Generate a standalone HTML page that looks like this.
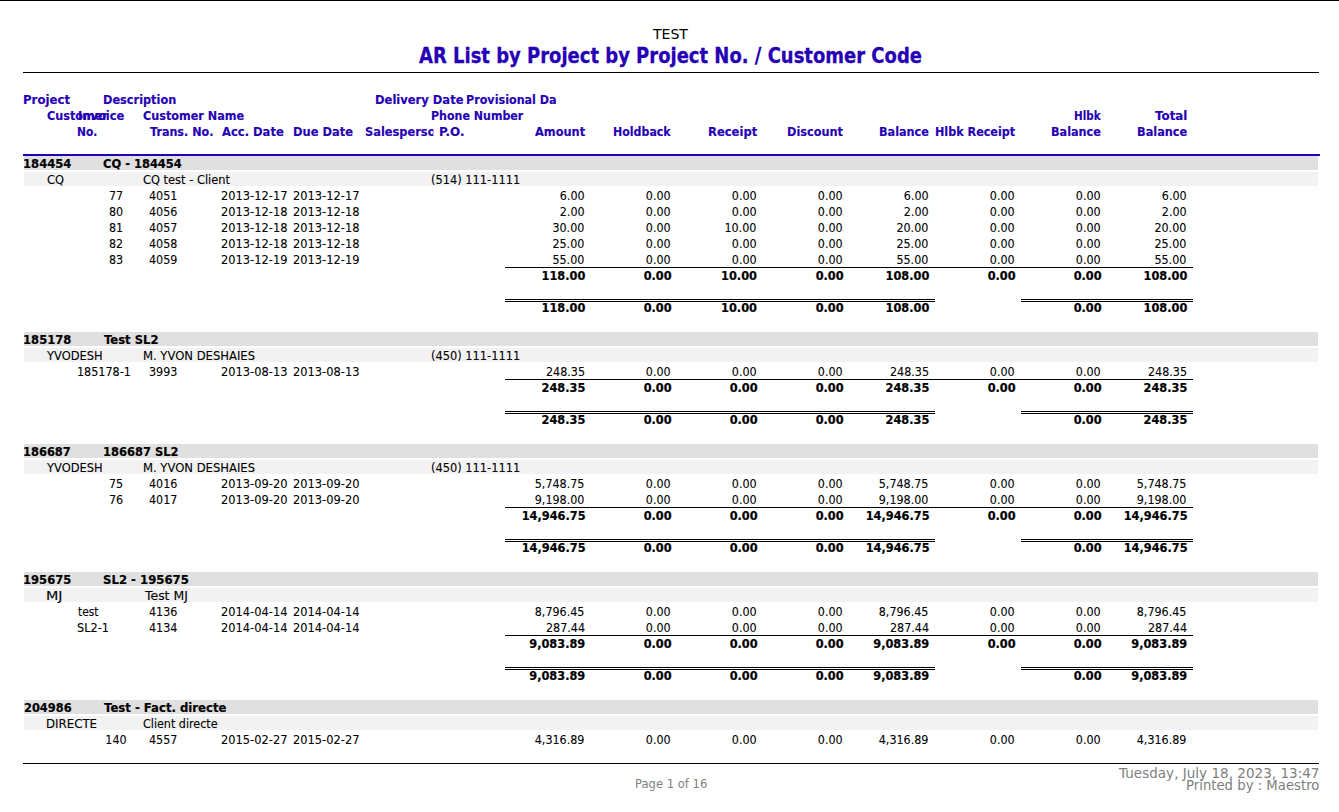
<!DOCTYPE html>
<html lang="en"><head><meta charset="utf-8"><title>AR List by Project by Project No. / Customer Code</title>
<style>

html,body{margin:0;padding:0;background:#fff;}
body{width:1339px;height:812px;position:relative;overflow:hidden;font-family:"DejaVu Sans","Liberation Sans",sans-serif;color:#000;}
.r{position:absolute;}
.t{position:absolute;white-space:nowrap;display:block;}
.n{font-family:"DejaVu Sans","Liberation Sans",sans-serif;font-size:12px;line-height:16px;height:16px;font-weight:400;color:#000;-webkit-text-stroke:0.1px #000;}
.b{font-family:"DejaVu Sans","Liberation Sans",sans-serif;font-size:12px;line-height:16px;height:16px;font-weight:700;color:#000;-webkit-text-stroke:0.2px #000;}
.h{font-family:"DejaVu Sans","Liberation Sans",sans-serif;font-size:12px;line-height:16px;height:16px;font-weight:700;color:#2600b4;-webkit-text-stroke:0.15px #2600b4;}
.co{font-family:"DejaVu Sans","Liberation Sans",sans-serif;font-size:14px;line-height:20px;height:20px;font-weight:400;color:#000;}
.ti{font-family:"DejaVu Sans","Liberation Sans",sans-serif;font-size:20.5px;line-height:28px;height:28px;font-weight:700;color:#2600b4;-webkit-text-stroke:0.3px #2600b4;}
.pg{font-family:"DejaVu Sans","Liberation Sans",sans-serif;font-size:12px;line-height:16px;height:16px;font-weight:400;color:#808080;}
.ft{font-family:"DejaVu Sans","Liberation Sans",sans-serif;font-size:14px;line-height:18px;height:18px;font-weight:400;color:#808080;}

</style></head><body>
<header class="report-header">
<div class="r" style="left:0px;top:0px;width:1339px;height:1px;background:#000"></div>
<div class="r" style="left:23px;top:72px;width:1296px;height:1px;background:#000"></div>
<span class="t co" style="top:24px;left:653.25px;transform:scaleX(1.0029);transform-origin:left center;">TEST</span>
<span class="t ti" style="top:42px;left:419.3px;transform:scaleX(0.8769);transform-origin:left center;">AR List by Project by Project No. / Customer Code</span>
</header>
<div class="column-header">
<span class="t h" style="top:92px;left:22.97px;transform:scaleX(0.9797);transform-origin:left center;">Project</span>
<span class="t h" style="top:92px;left:102.91px;transform:scaleX(0.9439);transform-origin:left center;">Description</span>
<span class="t h" style="top:92px;left:374.99px;transform:scaleX(0.9602);transform-origin:left center;">Delivery Date</span>
<span class="t h" style="top:92px;left:465.62px;transform:scaleX(0.9309);transform-origin:left center;">Provisional Da</span>
<span class="t h" style="top:108px;left:47.38px;transform:scaleX(0.936);transform-origin:left center;">Customer</span>
<span class="t h" style="top:108px;left:77.59px;transform:scaleX(0.9574);transform-origin:left center;">Invoice</span>
<span class="t h" style="top:108px;left:143.18px;transform:scaleX(0.936);transform-origin:left center;">Customer Name</span>
<span class="t h" style="top:108px;left:431.03px;transform:scaleX(0.9209);transform-origin:left center;">Phone Number</span>
<span class="t h" style="top:124px;left:76.86px;transform:scaleX(0.8916);transform-origin:left center;">No.</span>
<span class="t h" style="top:124px;left:149.85px;transform:scaleX(0.9299);transform-origin:left center;">Trans. No.</span>
<span class="t h" style="top:124px;left:221.9px;transform:scaleX(0.9624);transform-origin:left center;">Acc. Date</span>
<span class="t h" style="top:124px;left:292.89px;transform:scaleX(0.9551);transform-origin:left center;">Due Date</span>
<span class="t h" style="top:124px;left:365px;transform:scaleX(0.95);transform-origin:left center;width:72px;clip-path:inset(0 0 0 0)">Salesperso</span>
<span class="t h" style="top:124px;left:438.75px;transform:scaleX(0.9957);transform-origin:left center;">P.O.</span>
<span class="t h" style="top:124px;left:534.75px;transform:scaleX(0.9479);transform-origin:left center;">Amount</span>
<span class="t h" style="top:124px;left:612.98px;transform:scaleX(0.9194);transform-origin:left center;">Holdback</span>
<span class="t h" style="top:124px;left:707.99px;transform:scaleX(0.9628);transform-origin:left center;">Receipt</span>
<span class="t h" style="top:124px;left:787.01px;transform:scaleX(0.9425);transform-origin:left center;">Discount</span>
<span class="t h" style="top:124px;left:879.01px;transform:scaleX(0.9372);transform-origin:left center;">Balance</span>
<span class="t h" style="top:124px;left:934.72px;transform:scaleX(0.9322);transform-origin:left center;">Hlbk Receipt</span>
<span class="t h" style="top:124px;left:1051.27px;transform:scaleX(0.937);transform-origin:left center;">Balance</span>
<span class="t h" style="top:124px;left:1137.11px;transform:scaleX(0.943);transform-origin:left center;">Balance</span>
<span class="t h" style="top:108px;left:1073.88px;transform:scaleX(0.865);transform-origin:left center;">Hlbk</span>
<span class="t h" style="top:108px;left:1155.45px;transform:scaleX(0.989);transform-origin:left center;">Total</span>
<div class="r" style="left:23px;top:154px;width:1297px;height:2px;background:#2600b4"></div>
</div>
<main class="report-body">
<section class="project">
<div class="r" style="left:24px;top:156px;width:1294px;height:14px;background:#e0e0e0"></div>
<span class="t b" style="top:156px;left:22.74px;transform:scaleX(0.9658);transform-origin:left center;">184454</span>
<span class="t b" style="top:156px;left:102.97px;transform:scaleX(0.9558);transform-origin:left center;">CQ - 184454</span>
<div class="r" style="left:24px;top:172px;width:1294px;height:14px;background:#f2f2f2"></div>
<span class="t n" style="top:172px;left:46.83px;transform:scaleX(0.9576);transform-origin:left center;">CQ</span>
<span class="t n" style="top:172px;left:142.94px;transform:scaleX(0.9525);transform-origin:left center;">CQ test - Client</span>
<span class="t n" style="top:172px;left:430.5px;transform:scaleX(0.9504);transform-origin:left center;">(514) 111-1111</span>
<span class="t n" style="top:188px;left:15.9px;width:200px;text-align:center;transform:scaleX(0.93);transform-origin:center center;">77</span>
<span class="t n" style="top:188px;left:149px;transform:scaleX(0.93);transform-origin:left center;">4051</span>
<span class="t n" style="top:188px;left:220.9px;transform:scaleX(0.953);transform-origin:left center;">2013-12-17</span>
<span class="t n" style="top:188px;left:292.9px;transform:scaleX(0.953);transform-origin:left center;">2013-12-17</span>
<span class="t n" style="top:188px;right:754.3px;transform:scaleX(0.93);transform-origin:right center;">6.00</span>
<span class="t n" style="top:188px;right:668.3px;transform:scaleX(0.93);transform-origin:right center;">0.00</span>
<span class="t n" style="top:188px;right:582.3px;transform:scaleX(0.93);transform-origin:right center;">0.00</span>
<span class="t n" style="top:188px;right:496.3px;transform:scaleX(0.93);transform-origin:right center;">0.00</span>
<span class="t n" style="top:188px;right:410.3px;transform:scaleX(0.93);transform-origin:right center;">6.00</span>
<span class="t n" style="top:188px;right:324.3px;transform:scaleX(0.93);transform-origin:right center;">0.00</span>
<span class="t n" style="top:188px;right:238.3px;transform:scaleX(0.93);transform-origin:right center;">0.00</span>
<span class="t n" style="top:188px;right:152.3px;transform:scaleX(0.93);transform-origin:right center;">6.00</span>
<span class="t n" style="top:204px;left:15.9px;width:200px;text-align:center;transform:scaleX(0.93);transform-origin:center center;">80</span>
<span class="t n" style="top:204px;left:149px;transform:scaleX(0.93);transform-origin:left center;">4056</span>
<span class="t n" style="top:204px;left:220.9px;transform:scaleX(0.953);transform-origin:left center;">2013-12-18</span>
<span class="t n" style="top:204px;left:292.9px;transform:scaleX(0.953);transform-origin:left center;">2013-12-18</span>
<span class="t n" style="top:204px;right:754.3px;transform:scaleX(0.93);transform-origin:right center;">2.00</span>
<span class="t n" style="top:204px;right:668.3px;transform:scaleX(0.93);transform-origin:right center;">0.00</span>
<span class="t n" style="top:204px;right:582.3px;transform:scaleX(0.93);transform-origin:right center;">0.00</span>
<span class="t n" style="top:204px;right:496.3px;transform:scaleX(0.93);transform-origin:right center;">0.00</span>
<span class="t n" style="top:204px;right:410.3px;transform:scaleX(0.93);transform-origin:right center;">2.00</span>
<span class="t n" style="top:204px;right:324.3px;transform:scaleX(0.93);transform-origin:right center;">0.00</span>
<span class="t n" style="top:204px;right:238.3px;transform:scaleX(0.93);transform-origin:right center;">0.00</span>
<span class="t n" style="top:204px;right:152.3px;transform:scaleX(0.93);transform-origin:right center;">2.00</span>
<span class="t n" style="top:220px;left:15.9px;width:200px;text-align:center;transform:scaleX(0.93);transform-origin:center center;">81</span>
<span class="t n" style="top:220px;left:149px;transform:scaleX(0.93);transform-origin:left center;">4057</span>
<span class="t n" style="top:220px;left:220.9px;transform:scaleX(0.953);transform-origin:left center;">2013-12-18</span>
<span class="t n" style="top:220px;left:292.9px;transform:scaleX(0.953);transform-origin:left center;">2013-12-18</span>
<span class="t n" style="top:220px;right:754.3px;transform:scaleX(0.93);transform-origin:right center;">30.00</span>
<span class="t n" style="top:220px;right:668.3px;transform:scaleX(0.93);transform-origin:right center;">0.00</span>
<span class="t n" style="top:220px;right:582.3px;transform:scaleX(0.93);transform-origin:right center;">10.00</span>
<span class="t n" style="top:220px;right:496.3px;transform:scaleX(0.93);transform-origin:right center;">0.00</span>
<span class="t n" style="top:220px;right:410.3px;transform:scaleX(0.93);transform-origin:right center;">20.00</span>
<span class="t n" style="top:220px;right:324.3px;transform:scaleX(0.93);transform-origin:right center;">0.00</span>
<span class="t n" style="top:220px;right:238.3px;transform:scaleX(0.93);transform-origin:right center;">0.00</span>
<span class="t n" style="top:220px;right:152.3px;transform:scaleX(0.93);transform-origin:right center;">20.00</span>
<span class="t n" style="top:236px;left:15.9px;width:200px;text-align:center;transform:scaleX(0.93);transform-origin:center center;">82</span>
<span class="t n" style="top:236px;left:149px;transform:scaleX(0.93);transform-origin:left center;">4058</span>
<span class="t n" style="top:236px;left:220.9px;transform:scaleX(0.953);transform-origin:left center;">2013-12-18</span>
<span class="t n" style="top:236px;left:292.9px;transform:scaleX(0.953);transform-origin:left center;">2013-12-18</span>
<span class="t n" style="top:236px;right:754.3px;transform:scaleX(0.93);transform-origin:right center;">25.00</span>
<span class="t n" style="top:236px;right:668.3px;transform:scaleX(0.93);transform-origin:right center;">0.00</span>
<span class="t n" style="top:236px;right:582.3px;transform:scaleX(0.93);transform-origin:right center;">0.00</span>
<span class="t n" style="top:236px;right:496.3px;transform:scaleX(0.93);transform-origin:right center;">0.00</span>
<span class="t n" style="top:236px;right:410.3px;transform:scaleX(0.93);transform-origin:right center;">25.00</span>
<span class="t n" style="top:236px;right:324.3px;transform:scaleX(0.93);transform-origin:right center;">0.00</span>
<span class="t n" style="top:236px;right:238.3px;transform:scaleX(0.93);transform-origin:right center;">0.00</span>
<span class="t n" style="top:236px;right:152.3px;transform:scaleX(0.93);transform-origin:right center;">25.00</span>
<span class="t n" style="top:252px;left:15.9px;width:200px;text-align:center;transform:scaleX(0.93);transform-origin:center center;">83</span>
<span class="t n" style="top:252px;left:149px;transform:scaleX(0.93);transform-origin:left center;">4059</span>
<span class="t n" style="top:252px;left:220.9px;transform:scaleX(0.953);transform-origin:left center;">2013-12-19</span>
<span class="t n" style="top:252px;left:292.9px;transform:scaleX(0.953);transform-origin:left center;">2013-12-19</span>
<span class="t n" style="top:252px;right:754.3px;transform:scaleX(0.93);transform-origin:right center;">55.00</span>
<span class="t n" style="top:252px;right:668.3px;transform:scaleX(0.93);transform-origin:right center;">0.00</span>
<span class="t n" style="top:252px;right:582.3px;transform:scaleX(0.93);transform-origin:right center;">0.00</span>
<span class="t n" style="top:252px;right:496.3px;transform:scaleX(0.93);transform-origin:right center;">0.00</span>
<span class="t n" style="top:252px;right:410.3px;transform:scaleX(0.93);transform-origin:right center;">55.00</span>
<span class="t n" style="top:252px;right:324.3px;transform:scaleX(0.93);transform-origin:right center;">0.00</span>
<span class="t n" style="top:252px;right:238.3px;transform:scaleX(0.93);transform-origin:right center;">0.00</span>
<span class="t n" style="top:252px;right:152.3px;transform:scaleX(0.93);transform-origin:right center;">55.00</span>
<div class="r" style="left:505px;top:267px;width:688px;height:1px;background:#000"></div>
<span class="t b" style="top:268px;right:753.9px;transform:scaleX(0.945);transform-origin:right center;">118.00</span>
<span class="t b" style="top:268px;right:667.9px;transform:scaleX(0.945);transform-origin:right center;">0.00</span>
<span class="t b" style="top:268px;right:581.9px;transform:scaleX(0.945);transform-origin:right center;">10.00</span>
<span class="t b" style="top:268px;right:495.9px;transform:scaleX(0.945);transform-origin:right center;">0.00</span>
<span class="t b" style="top:268px;right:409.9px;transform:scaleX(0.945);transform-origin:right center;">108.00</span>
<span class="t b" style="top:268px;right:323.9px;transform:scaleX(0.945);transform-origin:right center;">0.00</span>
<span class="t b" style="top:268px;right:237.9px;transform:scaleX(0.945);transform-origin:right center;">0.00</span>
<span class="t b" style="top:268px;right:151.9px;transform:scaleX(0.945);transform-origin:right center;">108.00</span>
<div class="r" style="left:505px;top:299px;width:430px;height:1px;background:#000"></div>
<div class="r" style="left:1021px;top:299px;width:172px;height:1px;background:#000"></div>
<div class="r" style="left:505px;top:301px;width:430px;height:1px;background:#000"></div>
<div class="r" style="left:1021px;top:301px;width:172px;height:1px;background:#000"></div>
<span class="t b" style="top:300px;right:753.9px;transform:scaleX(0.945);transform-origin:right center;">118.00</span>
<span class="t b" style="top:300px;right:667.9px;transform:scaleX(0.945);transform-origin:right center;">0.00</span>
<span class="t b" style="top:300px;right:581.9px;transform:scaleX(0.945);transform-origin:right center;">10.00</span>
<span class="t b" style="top:300px;right:495.9px;transform:scaleX(0.945);transform-origin:right center;">0.00</span>
<span class="t b" style="top:300px;right:409.9px;transform:scaleX(0.945);transform-origin:right center;">108.00</span>
<span class="t b" style="top:300px;right:237.9px;transform:scaleX(0.945);transform-origin:right center;">0.00</span>
<span class="t b" style="top:300px;right:151.9px;transform:scaleX(0.945);transform-origin:right center;">108.00</span>
</section>
<section class="project">
<div class="r" style="left:24px;top:332px;width:1294px;height:14px;background:#e0e0e0"></div>
<span class="t b" style="top:332px;left:22.74px;transform:scaleX(0.9658);transform-origin:left center;">185178</span>
<span class="t b" style="top:332px;left:103.85px;transform:scaleX(0.9658);transform-origin:left center;">Test SL2</span>
<div class="r" style="left:24px;top:348px;width:1294px;height:14px;background:#f2f2f2"></div>
<span class="t n" style="top:348px;left:47.15px;transform:scaleX(0.9553);transform-origin:left center;">YVODESH</span>
<span class="t n" style="top:348px;left:142.74px;transform:scaleX(0.9658);transform-origin:left center;">M. YVON DESHAIES</span>
<span class="t n" style="top:348px;left:430.5px;transform:scaleX(0.9504);transform-origin:left center;">(450) 111-1111</span>
<span class="t n" style="top:364px;left:77.03px;transform:scaleX(0.9324);transform-origin:left center;">185178-1</span>
<span class="t n" style="top:364px;left:149px;transform:scaleX(0.93);transform-origin:left center;">3993</span>
<span class="t n" style="top:364px;left:220.9px;transform:scaleX(0.953);transform-origin:left center;">2013-08-13</span>
<span class="t n" style="top:364px;left:292.9px;transform:scaleX(0.953);transform-origin:left center;">2013-08-13</span>
<span class="t n" style="top:364px;right:754.3px;transform:scaleX(0.93);transform-origin:right center;">248.35</span>
<span class="t n" style="top:364px;right:668.3px;transform:scaleX(0.93);transform-origin:right center;">0.00</span>
<span class="t n" style="top:364px;right:582.3px;transform:scaleX(0.93);transform-origin:right center;">0.00</span>
<span class="t n" style="top:364px;right:496.3px;transform:scaleX(0.93);transform-origin:right center;">0.00</span>
<span class="t n" style="top:364px;right:410.3px;transform:scaleX(0.93);transform-origin:right center;">248.35</span>
<span class="t n" style="top:364px;right:324.3px;transform:scaleX(0.93);transform-origin:right center;">0.00</span>
<span class="t n" style="top:364px;right:238.3px;transform:scaleX(0.93);transform-origin:right center;">0.00</span>
<span class="t n" style="top:364px;right:152.3px;transform:scaleX(0.93);transform-origin:right center;">248.35</span>
<div class="r" style="left:505px;top:379px;width:688px;height:1px;background:#000"></div>
<span class="t b" style="top:380px;right:753.9px;transform:scaleX(0.945);transform-origin:right center;">248.35</span>
<span class="t b" style="top:380px;right:667.9px;transform:scaleX(0.945);transform-origin:right center;">0.00</span>
<span class="t b" style="top:380px;right:581.9px;transform:scaleX(0.945);transform-origin:right center;">0.00</span>
<span class="t b" style="top:380px;right:495.9px;transform:scaleX(0.945);transform-origin:right center;">0.00</span>
<span class="t b" style="top:380px;right:409.9px;transform:scaleX(0.945);transform-origin:right center;">248.35</span>
<span class="t b" style="top:380px;right:323.9px;transform:scaleX(0.945);transform-origin:right center;">0.00</span>
<span class="t b" style="top:380px;right:237.9px;transform:scaleX(0.945);transform-origin:right center;">0.00</span>
<span class="t b" style="top:380px;right:151.9px;transform:scaleX(0.945);transform-origin:right center;">248.35</span>
<div class="r" style="left:505px;top:411px;width:430px;height:1px;background:#000"></div>
<div class="r" style="left:1021px;top:411px;width:172px;height:1px;background:#000"></div>
<div class="r" style="left:505px;top:413px;width:430px;height:1px;background:#000"></div>
<div class="r" style="left:1021px;top:413px;width:172px;height:1px;background:#000"></div>
<span class="t b" style="top:412px;right:753.9px;transform:scaleX(0.945);transform-origin:right center;">248.35</span>
<span class="t b" style="top:412px;right:667.9px;transform:scaleX(0.945);transform-origin:right center;">0.00</span>
<span class="t b" style="top:412px;right:581.9px;transform:scaleX(0.945);transform-origin:right center;">0.00</span>
<span class="t b" style="top:412px;right:495.9px;transform:scaleX(0.945);transform-origin:right center;">0.00</span>
<span class="t b" style="top:412px;right:409.9px;transform:scaleX(0.945);transform-origin:right center;">248.35</span>
<span class="t b" style="top:412px;right:237.9px;transform:scaleX(0.945);transform-origin:right center;">0.00</span>
<span class="t b" style="top:412px;right:151.9px;transform:scaleX(0.945);transform-origin:right center;">248.35</span>
</section>
<section class="project">
<div class="r" style="left:24px;top:444px;width:1294px;height:14px;background:#e0e0e0"></div>
<span class="t b" style="top:444px;left:22.76px;transform:scaleX(0.9542);transform-origin:left center;">186687</span>
<span class="t b" style="top:444px;left:102.65px;transform:scaleX(0.9577);transform-origin:left center;">186687 SL2</span>
<div class="r" style="left:24px;top:460px;width:1294px;height:14px;background:#f2f2f2"></div>
<span class="t n" style="top:460px;left:47.15px;transform:scaleX(0.9553);transform-origin:left center;">YVODESH</span>
<span class="t n" style="top:460px;left:142.74px;transform:scaleX(0.9658);transform-origin:left center;">M. YVON DESHAIES</span>
<span class="t n" style="top:460px;left:430.5px;transform:scaleX(0.9504);transform-origin:left center;">(450) 111-1111</span>
<span class="t n" style="top:476px;left:15.9px;width:200px;text-align:center;transform:scaleX(0.93);transform-origin:center center;">75</span>
<span class="t n" style="top:476px;left:149px;transform:scaleX(0.93);transform-origin:left center;">4016</span>
<span class="t n" style="top:476px;left:220.9px;transform:scaleX(0.953);transform-origin:left center;">2013-09-20</span>
<span class="t n" style="top:476px;left:292.9px;transform:scaleX(0.953);transform-origin:left center;">2013-09-20</span>
<span class="t n" style="top:476px;right:754.3px;transform:scaleX(0.93);transform-origin:right center;">5,748.75</span>
<span class="t n" style="top:476px;right:668.3px;transform:scaleX(0.93);transform-origin:right center;">0.00</span>
<span class="t n" style="top:476px;right:582.3px;transform:scaleX(0.93);transform-origin:right center;">0.00</span>
<span class="t n" style="top:476px;right:496.3px;transform:scaleX(0.93);transform-origin:right center;">0.00</span>
<span class="t n" style="top:476px;right:410.3px;transform:scaleX(0.93);transform-origin:right center;">5,748.75</span>
<span class="t n" style="top:476px;right:324.3px;transform:scaleX(0.93);transform-origin:right center;">0.00</span>
<span class="t n" style="top:476px;right:238.3px;transform:scaleX(0.93);transform-origin:right center;">0.00</span>
<span class="t n" style="top:476px;right:152.3px;transform:scaleX(0.93);transform-origin:right center;">5,748.75</span>
<span class="t n" style="top:492px;left:15.9px;width:200px;text-align:center;transform:scaleX(0.93);transform-origin:center center;">76</span>
<span class="t n" style="top:492px;left:149px;transform:scaleX(0.93);transform-origin:left center;">4017</span>
<span class="t n" style="top:492px;left:220.9px;transform:scaleX(0.953);transform-origin:left center;">2013-09-20</span>
<span class="t n" style="top:492px;left:292.9px;transform:scaleX(0.953);transform-origin:left center;">2013-09-20</span>
<span class="t n" style="top:492px;right:754.3px;transform:scaleX(0.93);transform-origin:right center;">9,198.00</span>
<span class="t n" style="top:492px;right:668.3px;transform:scaleX(0.93);transform-origin:right center;">0.00</span>
<span class="t n" style="top:492px;right:582.3px;transform:scaleX(0.93);transform-origin:right center;">0.00</span>
<span class="t n" style="top:492px;right:496.3px;transform:scaleX(0.93);transform-origin:right center;">0.00</span>
<span class="t n" style="top:492px;right:410.3px;transform:scaleX(0.93);transform-origin:right center;">9,198.00</span>
<span class="t n" style="top:492px;right:324.3px;transform:scaleX(0.93);transform-origin:right center;">0.00</span>
<span class="t n" style="top:492px;right:238.3px;transform:scaleX(0.93);transform-origin:right center;">0.00</span>
<span class="t n" style="top:492px;right:152.3px;transform:scaleX(0.93);transform-origin:right center;">9,198.00</span>
<div class="r" style="left:505px;top:507px;width:688px;height:1px;background:#000"></div>
<span class="t b" style="top:508px;right:753.9px;transform:scaleX(0.945);transform-origin:right center;">14,946.75</span>
<span class="t b" style="top:508px;right:667.9px;transform:scaleX(0.945);transform-origin:right center;">0.00</span>
<span class="t b" style="top:508px;right:581.9px;transform:scaleX(0.945);transform-origin:right center;">0.00</span>
<span class="t b" style="top:508px;right:495.9px;transform:scaleX(0.945);transform-origin:right center;">0.00</span>
<span class="t b" style="top:508px;right:409.9px;transform:scaleX(0.945);transform-origin:right center;">14,946.75</span>
<span class="t b" style="top:508px;right:323.9px;transform:scaleX(0.945);transform-origin:right center;">0.00</span>
<span class="t b" style="top:508px;right:237.9px;transform:scaleX(0.945);transform-origin:right center;">0.00</span>
<span class="t b" style="top:508px;right:151.9px;transform:scaleX(0.945);transform-origin:right center;">14,946.75</span>
<div class="r" style="left:505px;top:539px;width:430px;height:1px;background:#000"></div>
<div class="r" style="left:1021px;top:539px;width:172px;height:1px;background:#000"></div>
<div class="r" style="left:505px;top:541px;width:430px;height:1px;background:#000"></div>
<div class="r" style="left:1021px;top:541px;width:172px;height:1px;background:#000"></div>
<span class="t b" style="top:540px;right:753.9px;transform:scaleX(0.945);transform-origin:right center;">14,946.75</span>
<span class="t b" style="top:540px;right:667.9px;transform:scaleX(0.945);transform-origin:right center;">0.00</span>
<span class="t b" style="top:540px;right:581.9px;transform:scaleX(0.945);transform-origin:right center;">0.00</span>
<span class="t b" style="top:540px;right:495.9px;transform:scaleX(0.945);transform-origin:right center;">0.00</span>
<span class="t b" style="top:540px;right:409.9px;transform:scaleX(0.945);transform-origin:right center;">14,946.75</span>
<span class="t b" style="top:540px;right:237.9px;transform:scaleX(0.945);transform-origin:right center;">0.00</span>
<span class="t b" style="top:540px;right:151.9px;transform:scaleX(0.945);transform-origin:right center;">14,946.75</span>
</section>
<section class="project">
<div class="r" style="left:24px;top:572px;width:1294px;height:14px;background:#e0e0e0"></div>
<span class="t b" style="top:572px;left:22.74px;transform:scaleX(0.9646);transform-origin:left center;">195675</span>
<span class="t b" style="top:572px;left:102.72px;transform:scaleX(0.9746);transform-origin:left center;">SL2 - 195675</span>
<div class="r" style="left:24px;top:588px;width:1294px;height:14px;background:#f2f2f2"></div>
<span class="t n" style="top:588px;left:46.36px;transform:scaleX(1.1913);transform-origin:left center;">MJ</span>
<span class="t n" style="top:588px;left:144.55px;transform:scaleX(1.036);transform-origin:left center;">Test MJ</span>
<span class="t n" style="top:604px;left:77.53px;transform:scaleX(0.8889);transform-origin:left center;">test</span>
<span class="t n" style="top:604px;left:149px;transform:scaleX(0.93);transform-origin:left center;">4136</span>
<span class="t n" style="top:604px;left:220.9px;transform:scaleX(0.953);transform-origin:left center;">2014-04-14</span>
<span class="t n" style="top:604px;left:292.9px;transform:scaleX(0.953);transform-origin:left center;">2014-04-14</span>
<span class="t n" style="top:604px;right:754.3px;transform:scaleX(0.93);transform-origin:right center;">8,796.45</span>
<span class="t n" style="top:604px;right:668.3px;transform:scaleX(0.93);transform-origin:right center;">0.00</span>
<span class="t n" style="top:604px;right:582.3px;transform:scaleX(0.93);transform-origin:right center;">0.00</span>
<span class="t n" style="top:604px;right:496.3px;transform:scaleX(0.93);transform-origin:right center;">0.00</span>
<span class="t n" style="top:604px;right:410.3px;transform:scaleX(0.93);transform-origin:right center;">8,796.45</span>
<span class="t n" style="top:604px;right:324.3px;transform:scaleX(0.93);transform-origin:right center;">0.00</span>
<span class="t n" style="top:604px;right:238.3px;transform:scaleX(0.93);transform-origin:right center;">0.00</span>
<span class="t n" style="top:604px;right:152.3px;transform:scaleX(0.93);transform-origin:right center;">8,796.45</span>
<span class="t n" style="top:620px;left:77.04px;transform:scaleX(0.9406);transform-origin:left center;">SL2-1</span>
<span class="t n" style="top:620px;left:149px;transform:scaleX(0.93);transform-origin:left center;">4134</span>
<span class="t n" style="top:620px;left:220.9px;transform:scaleX(0.953);transform-origin:left center;">2014-04-14</span>
<span class="t n" style="top:620px;left:292.9px;transform:scaleX(0.953);transform-origin:left center;">2014-04-14</span>
<span class="t n" style="top:620px;right:754.3px;transform:scaleX(0.93);transform-origin:right center;">287.44</span>
<span class="t n" style="top:620px;right:668.3px;transform:scaleX(0.93);transform-origin:right center;">0.00</span>
<span class="t n" style="top:620px;right:582.3px;transform:scaleX(0.93);transform-origin:right center;">0.00</span>
<span class="t n" style="top:620px;right:496.3px;transform:scaleX(0.93);transform-origin:right center;">0.00</span>
<span class="t n" style="top:620px;right:410.3px;transform:scaleX(0.93);transform-origin:right center;">287.44</span>
<span class="t n" style="top:620px;right:324.3px;transform:scaleX(0.93);transform-origin:right center;">0.00</span>
<span class="t n" style="top:620px;right:238.3px;transform:scaleX(0.93);transform-origin:right center;">0.00</span>
<span class="t n" style="top:620px;right:152.3px;transform:scaleX(0.93);transform-origin:right center;">287.44</span>
<div class="r" style="left:505px;top:635px;width:688px;height:1px;background:#000"></div>
<span class="t b" style="top:636px;right:753.9px;transform:scaleX(0.945);transform-origin:right center;">9,083.89</span>
<span class="t b" style="top:636px;right:667.9px;transform:scaleX(0.945);transform-origin:right center;">0.00</span>
<span class="t b" style="top:636px;right:581.9px;transform:scaleX(0.945);transform-origin:right center;">0.00</span>
<span class="t b" style="top:636px;right:495.9px;transform:scaleX(0.945);transform-origin:right center;">0.00</span>
<span class="t b" style="top:636px;right:409.9px;transform:scaleX(0.945);transform-origin:right center;">9,083.89</span>
<span class="t b" style="top:636px;right:323.9px;transform:scaleX(0.945);transform-origin:right center;">0.00</span>
<span class="t b" style="top:636px;right:237.9px;transform:scaleX(0.945);transform-origin:right center;">0.00</span>
<span class="t b" style="top:636px;right:151.9px;transform:scaleX(0.945);transform-origin:right center;">9,083.89</span>
<div class="r" style="left:505px;top:667px;width:430px;height:1px;background:#000"></div>
<div class="r" style="left:1021px;top:667px;width:172px;height:1px;background:#000"></div>
<div class="r" style="left:505px;top:669px;width:430px;height:1px;background:#000"></div>
<div class="r" style="left:1021px;top:669px;width:172px;height:1px;background:#000"></div>
<span class="t b" style="top:668px;right:753.9px;transform:scaleX(0.945);transform-origin:right center;">9,083.89</span>
<span class="t b" style="top:668px;right:667.9px;transform:scaleX(0.945);transform-origin:right center;">0.00</span>
<span class="t b" style="top:668px;right:581.9px;transform:scaleX(0.945);transform-origin:right center;">0.00</span>
<span class="t b" style="top:668px;right:495.9px;transform:scaleX(0.945);transform-origin:right center;">0.00</span>
<span class="t b" style="top:668px;right:409.9px;transform:scaleX(0.945);transform-origin:right center;">9,083.89</span>
<span class="t b" style="top:668px;right:237.9px;transform:scaleX(0.945);transform-origin:right center;">0.00</span>
<span class="t b" style="top:668px;right:151.9px;transform:scaleX(0.945);transform-origin:right center;">9,083.89</span>
</section>
<section class="project">
<div class="r" style="left:24px;top:700px;width:1294px;height:14px;background:#e0e0e0"></div>
<span class="t b" style="top:700px;left:23.5px;transform:scaleX(0.9505);transform-origin:left center;">204986</span>
<span class="t b" style="top:700px;left:103.85px;transform:scaleX(0.9725);transform-origin:left center;">Test - Fact. directe</span>
<div class="r" style="left:24px;top:716px;width:1294px;height:14px;background:#f2f2f2"></div>
<span class="t n" style="top:716px;left:46.32px;transform:scaleX(0.982);transform-origin:left center;">DIRECTE</span>
<span class="t n" style="top:716px;left:142.95px;transform:scaleX(0.9291);transform-origin:left center;">Client directe</span>
<span class="t n" style="top:732px;left:15.9px;width:200px;text-align:center;transform:scaleX(0.93);transform-origin:center center;">140</span>
<span class="t n" style="top:732px;left:149px;transform:scaleX(0.93);transform-origin:left center;">4557</span>
<span class="t n" style="top:732px;left:220.9px;transform:scaleX(0.953);transform-origin:left center;">2015-02-27</span>
<span class="t n" style="top:732px;left:292.9px;transform:scaleX(0.953);transform-origin:left center;">2015-02-27</span>
<span class="t n" style="top:732px;right:754.3px;transform:scaleX(0.93);transform-origin:right center;">4,316.89</span>
<span class="t n" style="top:732px;right:668.3px;transform:scaleX(0.93);transform-origin:right center;">0.00</span>
<span class="t n" style="top:732px;right:582.3px;transform:scaleX(0.93);transform-origin:right center;">0.00</span>
<span class="t n" style="top:732px;right:496.3px;transform:scaleX(0.93);transform-origin:right center;">0.00</span>
<span class="t n" style="top:732px;right:410.3px;transform:scaleX(0.93);transform-origin:right center;">4,316.89</span>
<span class="t n" style="top:732px;right:324.3px;transform:scaleX(0.93);transform-origin:right center;">0.00</span>
<span class="t n" style="top:732px;right:238.3px;transform:scaleX(0.93);transform-origin:right center;">0.00</span>
<span class="t n" style="top:732px;right:152.3px;transform:scaleX(0.93);transform-origin:right center;">4,316.89</span>
</section>
</main>
<footer class="report-footer">
<div class="r" style="left:23px;top:763px;width:1296px;height:1px;background:#000"></div>
<span class="t pg" style="top:776px;left:634.54px;transform:scaleX(0.9644);transform-origin:left center;">Page 1 of 16</span>
<span class="t ft" style="top:764px;left:1118.95px;transform:scaleX(0.968);transform-origin:left center;">Tuesday, July 18, 2023, 13:47</span>
<span class="t ft" style="top:776px;left:1185.67px;transform:scaleX(0.946);transform-origin:left center;">Printed by : Maestro</span>
</footer>
</body></html>
